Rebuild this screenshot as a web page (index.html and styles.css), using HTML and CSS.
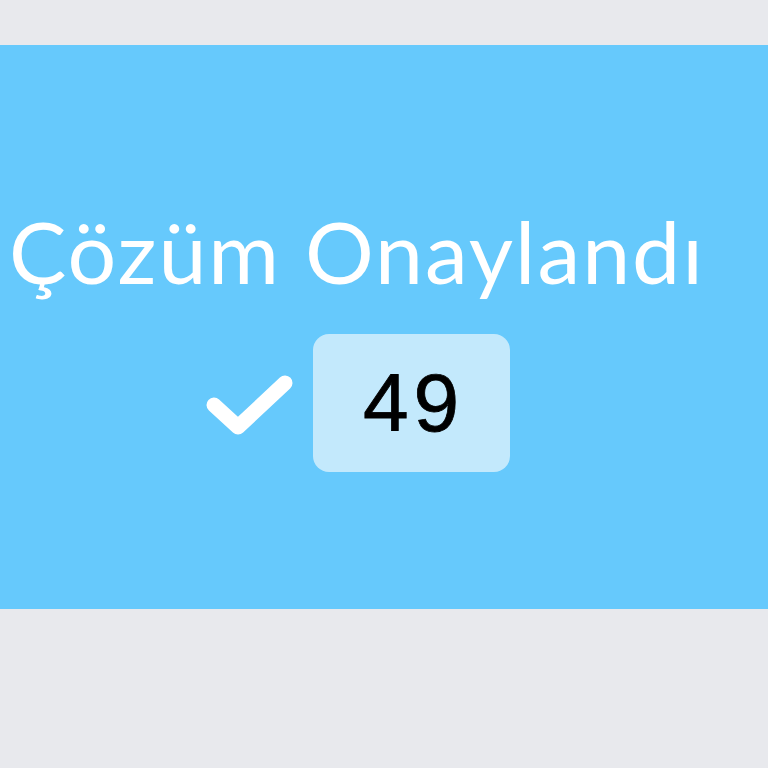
FILE: index.html
```html
<!DOCTYPE html>
<html lang="tr">
<head>
<meta charset="utf-8">
<link rel="stylesheet" href="styles.css">
</head>
<body>
<div class="page">
  <section class="band">
    <div class="content">
      <h1 class="title">Çözüm Onaylandı</h1>
      <div class="row">
        <svg class="check" viewBox="0 0 90 66" width="90" height="66" aria-hidden="true">
          <path d="M9 34 L33 56 L80 12" fill="none" stroke="#ffffff" stroke-width="15" stroke-linecap="round" stroke-linejoin="round"/>
        </svg>
        <div class="count">49</div>
      </div>
    </div>
  </section>
</div>
</body>
</html>
```
FILE: styles.css
```css
html, body {
  margin: 0;
  padding: 0;
  background: #e8e9ed;
}
.page {
  padding-top: 45px;
}
.band {
  height: 564px;
  background: #66c9fc;
  box-sizing: border-box;
  padding-top: 156px;
}
.content {
  width: 714px;
  display: flex;
  flex-direction: column;
  align-items: center;
}
.title {
  margin: 0;
  font-family: Lato, "Noto Sans", sans-serif;
  font-weight: 400;
  font-size: 86px;
  letter-spacing: 2px;
  line-height: 100px;
  color: #ffffff;
  white-space: nowrap;
}
.row {
  margin-top: 33px;
  display: flex;
  align-items: center;
  gap: 18px;
}
.check {
  display: block;
  margin-top: 2px;
}
.count {
  width: 197px;
  height: 138px;
  box-sizing: border-box;
  padding-left: 5px;
  border-radius: 16px;
  background: #c3e9fc;
  display: flex;
  align-items: center;
  justify-content: center;
  font-family: "Liberation Sans", Arial, sans-serif;
  font-size: 82px;
  letter-spacing: 5px;
  color: #000000;
  -webkit-text-stroke: 0.8px #000000;
}
```
